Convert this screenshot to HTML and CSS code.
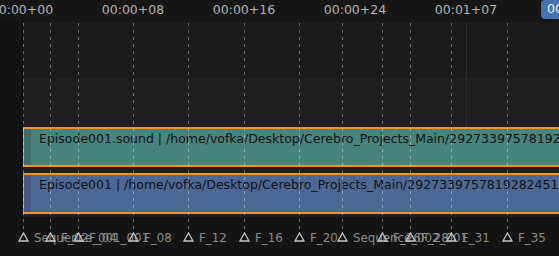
FILE: index.html
```html
<!DOCTYPE html>
<html>
<head>
<meta charset="utf-8">
<link rel="stylesheet" href="styles.css">
</head>
<body>
<div class="editor">
  <div class="ruler">
    <span class="tick" style="left:22px">00:00+00</span>
    <span class="tick" style="left:133px">00:00+08</span>
    <span class="tick" style="left:244px">00:00+16</span>
    <span class="tick" style="left:355px">00:00+24</span>
    <span class="tick" style="left:466px">00:01+07</span>
    <span class="cur-frame">00:01+15</span>
  </div>
  <div class="main">
    <div class="band band-top"></div>
    <div class="band band-channels">
      <div class="strip strip-sound">
        <div class="handle"></div>
        <span class="strip-label">Episode001.sound | /home/vofka/Desktop/Cerebro_Projects_Main/292733975781928245139</span>
      </div>
      <div class="strip strip-movie">
        <div class="handle"></div>
        <span class="strip-label">Episode001 | /home/vofka/Desktop/Cerebro_Projects_Main/2927339757819282451390</span>
      </div>
    </div>
    <div class="band band-markers"></div>

    <div class="out-range"></div>
    <div class="range-edge"></div>
    <div class="solid-line" style="left:466px"></div>

    <div class="marker" style="left:23px"><span class="mline"></span><svg class="tri" viewBox="0 0 11 10"><path d="M5.5 1 L10 9 L1 9 Z"/></svg><span class="mlabel">Sequence_001_001</span></div>
    <div class="marker" style="left:50px"><span class="mline"></span><svg class="tri" viewBox="0 0 11 10"><path d="M5.5 1 L10 9 L1 9 Z"/></svg><span class="mlabel">F_02</span></div>
    <div class="marker" style="left:78px"><span class="mline"></span><svg class="tri" viewBox="0 0 11 10"><path d="M5.5 1 L10 9 L1 9 Z"/></svg><span class="mlabel">F_04</span></div>
    <div class="marker" style="left:133px"><span class="mline"></span><svg class="tri" viewBox="0 0 11 10"><path d="M5.5 1 L10 9 L1 9 Z"/></svg><span class="mlabel">F_08</span></div>
    <div class="marker" style="left:188px"><span class="mline"></span><svg class="tri" viewBox="0 0 11 10"><path d="M5.5 1 L10 9 L1 9 Z"/></svg><span class="mlabel">F_12</span></div>
    <div class="marker" style="left:244px"><span class="mline"></span><svg class="tri" viewBox="0 0 11 10"><path d="M5.5 1 L10 9 L1 9 Z"/></svg><span class="mlabel">F_16</span></div>
    <div class="marker" style="left:299px"><span class="mline"></span><svg class="tri" viewBox="0 0 11 10"><path d="M5.5 1 L10 9 L1 9 Z"/></svg><span class="mlabel">F_20</span></div>
    <div class="marker" style="left:342px"><span class="mline"></span><svg class="tri" viewBox="0 0 11 10"><path d="M5.5 1 L10 9 L1 9 Z"/></svg><span class="mlabel">Sequence_002_001</span></div>
    <div class="marker" style="left:382px"><span class="mline"></span><svg class="tri" viewBox="0 0 11 10"><path d="M5.5 1 L10 9 L1 9 Z"/></svg><span class="mlabel">F_26</span></div>
    <div class="marker" style="left:410px"><span class="mline"></span><svg class="tri" viewBox="0 0 11 10"><path d="M5.5 1 L10 9 L1 9 Z"/></svg><span class="mlabel">F_28</span></div>
    <div class="marker" style="left:451px"><span class="mline"></span><svg class="tri" viewBox="0 0 11 10"><path d="M5.5 1 L10 9 L1 9 Z"/></svg><span class="mlabel">F_31</span></div>
    <div class="marker" style="left:507px"><span class="mline"></span><svg class="tri" viewBox="0 0 11 10"><path d="M5.5 1 L10 9 L1 9 Z"/></svg><span class="mlabel">F_35</span></div>
  </div>
</div>
</body>
</html>
```

FILE: styles.css
```css
html, body {
  margin: 0;
  padding: 0;
  background: #141414;
}
.editor {
  width: 559px;
  height: 256px;
  overflow: hidden;
  position: relative;
  font-family: "DejaVu Sans", sans-serif;
  display: flex;
  flex-direction: column;
}
.ruler {
  height: 22px;
  flex: none;
  background: #161616;
  position: relative;
}
.tick {
  position: absolute;
  top: 2px;
  transform: translateX(-50%);
  font-size: 12.5px;
  line-height: 15px;
  color: #b3b3b3;
  white-space: nowrap;
}
.cur-frame {
  position: absolute;
  left: 541px;
  top: 0;
  height: 19px;
  padding: 0 6px;
  background: #4772b3;
  border-radius: 4px;
  color: #f0f0f0;
  font-size: 12.5px;
  line-height: 18px;
  white-space: nowrap;
}
.main {
  flex: 1;
  position: relative;
  display: flex;
  flex-direction: column;
}
.band-top {
  height: 56px;
  background: #1b1b1b;
}
.band-channels {
  height: 139px;
  background: #1f1f1f;
  padding-top: 49px;
  box-sizing: border-box;
  display: flex;
  flex-direction: column;
  gap: 6px;
}
.band-markers {
  flex: 1;
  background: #141414;
}
.strip {
  margin-left: 22px;
  width: 600px;
  height: 40px;
  box-sizing: border-box;
  border: 2px solid #f7951c;
  display: flex;
  align-items: flex-start;
  flex: none;
}
.strip-movie {
  height: 41px;
}
.strip-sound {
  background: #49837d;
}
.strip-sound .handle {
  background: #3d6e69;
}
.strip-movie {
  background: #4e6895;
}
.strip-movie .handle {
  background: #435a81;
}
.handle {
  width: 7px;
  align-self: stretch;
  flex: none;
}
.strip-label {
  margin-left: 8px;
  margin-top: 2px;
  font-size: 12.5px;
  line-height: 15px;
  color: #121212;
  white-space: nowrap;
}
.out-range {
  position: absolute;
  left: 0;
  top: 0;
  width: 22px;
  bottom: 0;
  background: #131313;
}
.range-edge {
  position: absolute;
  left: 22px;
  top: 0;
  width: 1px;
  height: 195px;
  background: #0a0a0a;
}
.solid-line {
  position: absolute;
  top: 0;
  width: 1px;
  height: 105px;
  background: #2e2e2e;
}
.marker {
  position: absolute;
  top: 0;
  width: 0;
  height: 100%;
}
.mline {
  position: absolute;
  left: 0;
  top: 1px;
  width: 1px;
  height: 209px;
  background: repeating-linear-gradient(to bottom, rgba(255,255,255,0.36) 0 3px, transparent 3px 7px);
}
.tri {
  position: absolute;
  left: -5px;
  top: 210px;
  width: 11px;
  height: 10px;
  fill: none;
  stroke: #c4c4c4;
  stroke-width: 1.3;
  stroke-linejoin: miter;
}
.mlabel {
  position: absolute;
  left: 11px;
  top: 209px;
  font-size: 11.8px;
  line-height: 15px;
  color: #8c8c8c;
  white-space: nowrap;
}
```
